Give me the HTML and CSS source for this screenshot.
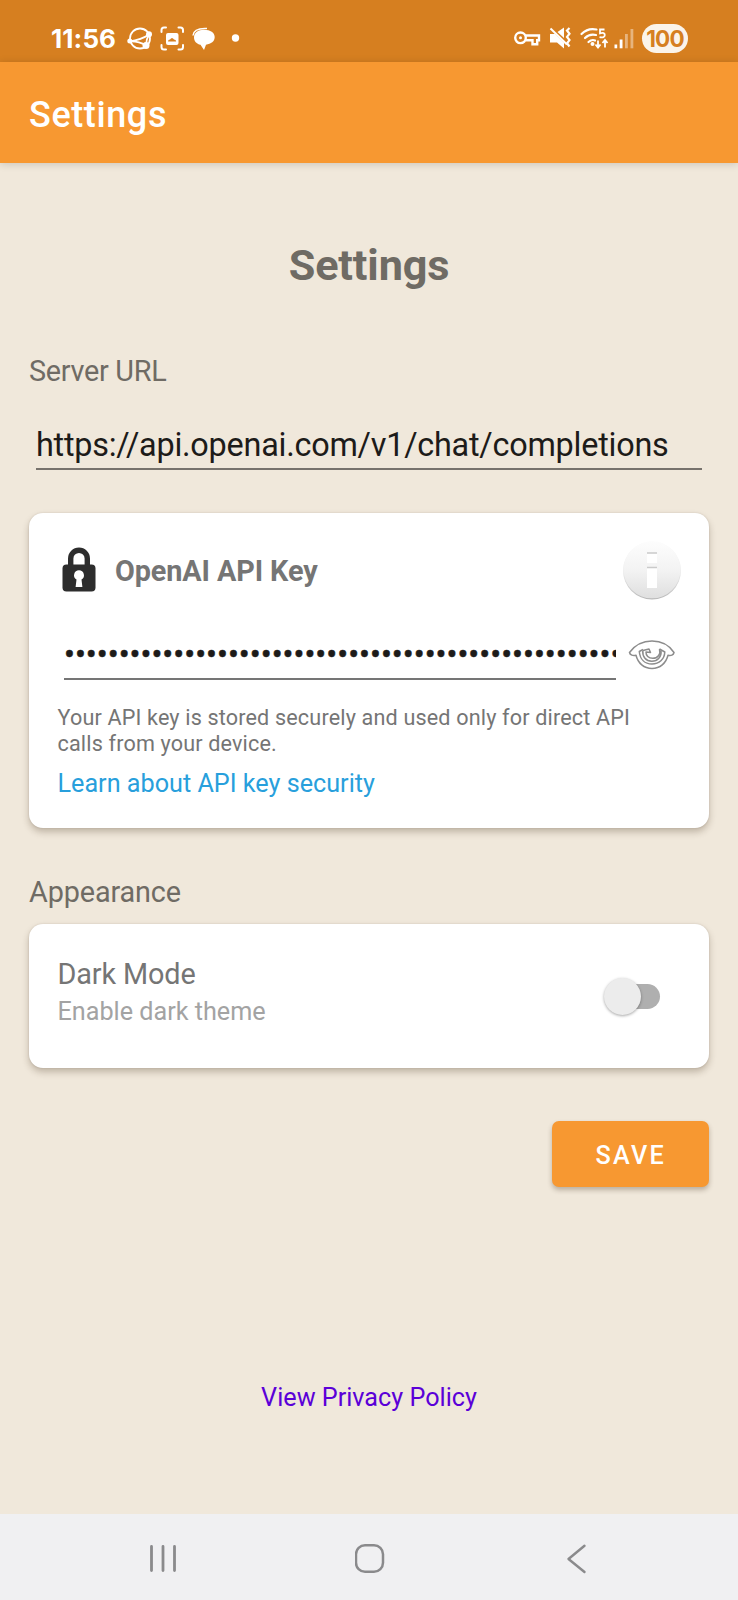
FILE: index.html
```html
<!DOCTYPE html>
<html lang="en">
<head>
<meta charset="utf-8">
<title>Settings</title>
<link rel="stylesheet" href="styles.css">
</head>
<body>
<div class="screen">
  <header class="status">
    <span class="clock">11:56</span>
    <svg class="status-left" width="124" height="30" viewBox="0 0 124 30" fill="none" stroke="#fff" stroke-width="1.8">
      <circle cx="13" cy="14.500" r="10"/>
      <path d="M2.500 17.500C10 16.500 17 14 22 10.500M2.500 17.500q9-.5 16.500 4M22 10.500q-3 5-3 11"/>
      <g fill="#fff" stroke="none"><circle cx="2.800" cy="17" r="2.500"/><circle cx="22" cy="10.300" r="3"/><circle cx="19" cy="21.500" r="3.500"/></g>
      <g stroke-width="2" stroke-linecap="round"><path d="M34.500 8V6q0-2.500 2.500-2.500h2M51.500 3.500h2q2.500 0 2.500 2.500v2M56 21v2q0 2.500-2.500 2.500h-2M39 25.500h-2q-2.500 0-2.500-2.500v-2"/></g>
      <rect x="39" y="9" width="12.500" height="12" rx="2" fill="#fff" stroke="none"/>
      <path d="M41 17.500q0-2 2-2 2-3 4 0 2 0 2.200 2z" fill="#d67f20" stroke="none"/>
      <path d="M77 5.800c6.500 0 10.700 3 10.700 7.300 0 4.300-3.600 7-8.700 7.700L77 26l-3.500-5.200c-4-1-6.500-3.600-6.500-7.400 0-4.600 4-7.600 10-7.600z" fill="#fff" stroke="none"/>
      <path d="M66 11.500c.5-5 5-7.500 14-7" stroke-width="1.500"/>
      <circle cx="108.500" cy="14" r="3.700" fill="#fff" stroke="none"/>
    </svg>
    <svg class="status-right" width="122" height="30" viewBox="0 0 122 30" fill="none" stroke="#fff" stroke-width="2.400">
      <circle cx="6.500" cy="13.800" r="5.300"/>
      <circle cx="6.500" cy="13.800" r="1.500" fill="#fff" stroke="none"/>
      <path d="M11.300 11.500H25v4.700h-1.800v4h-4.700v-4h-7.200"/>
      <path d="M36 10h5l9 8.500v6l-7-6h-7zM43.500 8l6.500-4.500V14z" fill="#fff" stroke="none"/>
      <path d="M36.500 4.500L53 20.500" stroke-width="2"/>
      <path d="M55.500 4l-2.500 2.500 2.500 3.200-2.500 3.200 2.500 3.200-2.500 3.200 2.500 3.200" stroke-width="2.200"/>
      <g stroke-width="2.200" stroke-linecap="round"><path d="M67.500 10Q74 3.500 82.500 5.500M71 14q4.500-4.500 11-3M74.500 18q3.500-3 6.500-1.500"/></g>
      <circle cx="78.500" cy="20" r="2" fill="#fff" stroke="none"/>
      <path d="M90.500 5.500H86v3.800q4.800-1.300 4.800 1.700t-5.300 2.200" stroke-width="1.800"/>
      <path d="M84 16.500v7M81.500 20.500l2.500 3 2.500-3M91 23.500v-7M88.500 19l2.500-3 2.500 3" stroke-width="1.800"/>
      <g fill="#fff" stroke="none"><rect x="100.500" y="20.500" width="2.700" height="3.800"/><rect x="105.700" y="15.500" width="2.800" height="8.800"/><rect x="111" y="10" width="2.800" height="14.300" opacity=".42"/><rect x="116.500" y="5" width="2.800" height="19.300" opacity=".42"/></g>
    </svg>
    <span class="battery">100</span>
  </header>
  <div class="appbar"><span class="appbar-title">Settings</span></div>

  <main class="content">
    <h1 class="heading">Settings</h1>
    <div class="label server-label">Server URL</div>
    <div class="field url-field">https://api.openai.com/v1/chat/completions</div>

    <section class="card key-card">
      <div class="key-head">
        <svg class="lock" width="34" height="46" viewBox="0 0 34 46">
          <path d="M8.700 19V11.500a8.300 8.300 0 0 1 16.600 0V19" fill="none" stroke="#2d2d2d" stroke-width="5.400"/>
          <rect x=".5" y="17.500" width="33" height="27" rx="4" fill="#2d2d2d"/>
          <path d="M17 23.200a5 5 0 0 1 2.500 9.300l.9 7.500h-6.800l.9-7.500A5 5 0 0 1 17 23.200z" fill="#fff"/>
        </svg>
        <span class="key-title">OpenAI API Key</span>
        <svg class="info" width="58" height="60" viewBox="0 0 58 60">
          <defs>
            <linearGradient id="disc" x1="0" y1="0" x2="0" y2="1"><stop offset="0" stop-color="#fdfdfd"/><stop offset=".5" stop-color="#f3f3f3"/><stop offset="1" stop-color="#dfdfdf"/></linearGradient>
            <linearGradient id="rim" x1="0" y1="0" x2="0" y2="1"><stop offset="0" stop-color="#fafafa"/><stop offset=".5" stop-color="#ededed"/><stop offset="1" stop-color="#b8b8b8"/></linearGradient>
          </defs>
          <circle cx="29" cy="29.500" r="29" fill="url(#rim)"/>
          <circle cx="29" cy="28.800" r="28.500" fill="url(#disc)"/>
          <path d="M24 12h10v10H24zM24 26.500h10V47H24z" fill="#fff"/>
          <path d="M24 12h10M24 26.500h10" stroke="#cacaca" stroke-width="1.500"/>
        </svg>
      </div>
      <div class="key-row">
        <div class="field key-field">•••••••••••••••••••••••••••••••••••••••••••••••••••</div>
        <svg class="eye" width="48" height="32" viewBox="0 0 48 32" fill="none" stroke="#8c8c8c" stroke-width="1.500" stroke-linejoin="round">
          <path d="M1.500 13.500C7 6 15 2 24 2s17 4 22 11.500c-.5 2.500-3 3.500-6 2.700-2 8-8 13.300-16 13.300S10 24.200 8 16.200c-3 .8-6-.2-6.500-2.700z"/>
          <path d="M15 10.500l-3.700 2C12 20.500 17 25 24 25s12.500-4.500 12.800-12l-5.300-3"/>
          <path d="M14.800 11.500c-.5 6.500 3.200 10.700 9 10.700s10-4.500 9.200-10.700M31.500 10c1.500 5.500-2 9.300-6.700 9.300-4.300 0-7-2.800-6.800-6.300l4.500.5-1.500-3.500-6 1.500"/>
        </svg>
      </div>
      <p class="hint">Your API key is stored securely and used only for direct API<br>calls from your device.</p>
      <a class="learn">Learn about API key security</a>
    </section>

    <div class="label appearance-label">Appearance</div>
    <section class="card theme-card">
      <div class="theme-text">
        <div class="label">Dark Mode</div>
        <div class="sub">Enable dark theme</div>
      </div>
      <div class="switch"><div class="thumb"></div></div>
    </section>

    <button class="save">SAVE</button>
    <a class="privacy">View Privacy Policy</a>
  </main>

  <nav class="nav">
    <svg width="30" height="30" viewBox="0 0 30 30" stroke="#8a8a8c" stroke-width="2.800" stroke-linecap="round"><path d="M3.500 2.500v24M15 2.500v24M26.500 2.500v24"/></svg>
    <svg width="30" height="30" viewBox="0 0 30 30" fill="none" stroke="#8a8a8c" stroke-width="2.500"><rect x="1" y="1.300" width="27" height="26.500" rx="9"/></svg>
    <svg width="30" height="30" viewBox="0 0 30 30" fill="none" stroke="#8a8a8c" stroke-width="2.400" stroke-linecap="round" stroke-linejoin="round"><path d="M22.500 1.800L6.500 15l16 13"/></svg>
  </nav>
</div>
</body>
</html>
```
FILE: styles.css
```css
* { box-sizing: border-box; }
body { margin: 0; background: #f0e8db; font-family: Roboto, "Liberation Sans", sans-serif; color: #6f6b64; }
.screen { width: 738px; height: 1600px; display: flex; flex-direction: column; overflow: hidden; }
svg { display: block; flex: none; }

.status { height: 62px; flex: none; background: #d67f20; display: flex; align-items: center; padding: 15px 50px 0 51px; color: #fff; }
.clock { font: 700 26px/30px Inter, sans-serif; letter-spacing: .1px; width: 76px; white-space: nowrap; }
.status-left { margin: 0 auto 0 0; }
.status-right { margin: 1px 6px 0 0; }
.battery { width: 46px; height: 29px; border-radius: 15px; background: #fbf4ea; color: #d67f20; font: 700 22.5px/29px Inter, sans-serif; text-align: center; letter-spacing: -.8px; }

.appbar { height: 101px; flex: none; background: #f79831; box-shadow: 0 1px 8px rgba(0,0,0,.16); display: flex; align-items: center; padding: 4px 0 0 29px; color: #fff; }
.appbar-title { font-size: 36px; font-weight: 500; line-height: 42px; letter-spacing: .6px; }

.content { flex: 1; display: flex; flex-direction: column; padding: 78px 29px 0; }
.heading { margin: 0; text-align: center; font-size: 43.2px; font-weight: 700; line-height: 50px; letter-spacing: -.12px; }
.label { font-size: 28.8px; line-height: 34px; letter-spacing: -.12px; }
.server-label { margin-top: 63px; letter-spacing: -.28px; }
.field { font-size: 32.4px; line-height: 38px; color: #1d1b19; padding-bottom: 4px; border-bottom: 2px solid #77726c; white-space: nowrap; overflow: hidden; }
.url-field { margin: 38px 7px 0; letter-spacing: -.235px; }

.card { background: #fff; border-radius: 14px; box-shadow: 0 4px 7px rgba(60,40,20,.27), 0 0 2px rgba(60,40,20,.14); color: #757575; }
.key-card { height: 315px; margin-top: 43px; padding: 28px 28px 0 28.500px; display: flex; flex-direction: column; }
.key-head { display: flex; align-items: center; height: 60px; }
.lock { margin: -2px 0 0 4.500px; }
.key-title { font-size: 28.8px; font-weight: 700; line-height: 34px; letter-spacing: -.1px; margin: -1px auto 0 19px; }
.key-row { display: flex; align-items: center; margin-top: 35px; }
.key-field { width: 552px; margin-left: 6.500px; border-bottom-color: #757575; -webkit-text-stroke: .5px #1d1b19; }
.eye { margin: -6px 0 0 12px; }
.hint { margin: 25px 0 0; font-size: 21.6px; line-height: 25.5px; letter-spacing: .155px; white-space: nowrap; }
.learn { margin-top: 13px; font-size: 25.2px; line-height: 30px; color: #289fdc; }

.appearance-label { margin-top: 47px; }
.theme-card { height: 144px; margin-top: 15px; padding: 33px 49px 0 28.500px; display: flex; justify-content: space-between; }
.sub { margin-top: 6px; font-size: 25.2px; line-height: 30px; color: #a3a3a3; }
.switch { width: 54px; height: 25px; margin-top: 27px; border-radius: 13px; background: #afafaf; display: flex; align-items: center; }
.thumb { flex: none; width: 37px; height: 37px; margin-left: -2.500px; border-radius: 50%; background: #ececec; box-shadow: 0 1px 3px rgba(0,0,0,.35); }

.save { align-self: flex-end; width: 157.500px; height: 66px; margin-top: 53px; padding: 3px 0 0 1px; border: 0; border-radius: 7px; background: #f79831; color: #fff; font: 500 25.2px/30px Roboto, sans-serif; letter-spacing: 2.25px; box-shadow: 0 3px 5px rgba(60,40,20,.3); }
.privacy { align-self: center; margin-top: 196px; font-size: 25.2px; line-height: 30px; color: #5b00d8; }

.nav { height: 86px; flex: none; background: #f0f0f2; display: flex; justify-content: space-between; padding: 30px 146px 0 148px; margin-top: auto; }
```
